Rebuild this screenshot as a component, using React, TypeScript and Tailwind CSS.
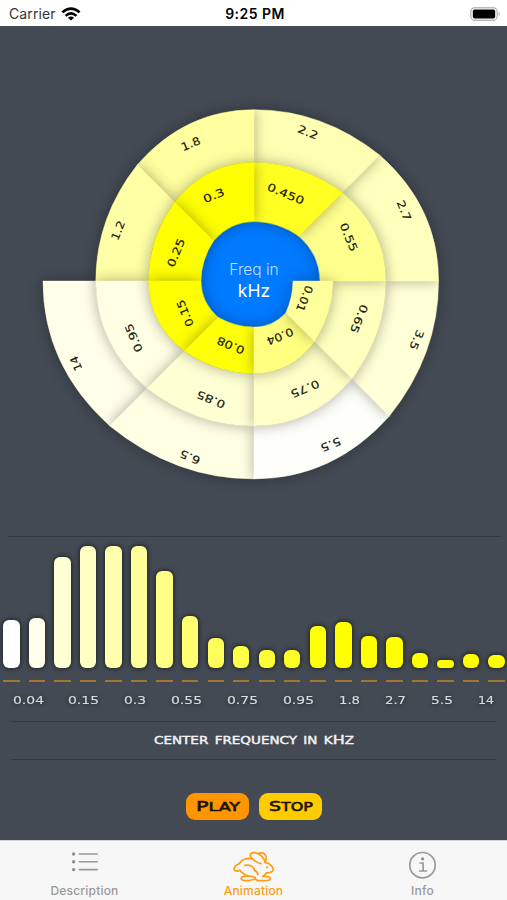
import React from 'react'

type Band = {
  label: string
  color: string
  x: number
  y: number
  width: number
}

const CENTER = { x: 254, y: 280.6 }

const bands: Band[] = [
  { label: '0.01', color: '#ffff9c', x: 304.5, y: 298, width: 27 },
  { label: '0.04', color: '#ffff80', x: 280, y: 336, width: 28 },
  { label: '0.08', color: '#ffff08', x: 230.7, y: 345, width: 29 },
  { label: '0.15', color: '#ffff00', x: 185, y: 312.7, width: 28 },
  { label: '0.25', color: '#ffff00', x: 176, y: 252.3, width: 30 },
  { label: '0.3', color: '#ffff00', x: 213.7, y: 195, width: 22 },
  { label: '0.450', color: '#ffff22', x: 285.7, y: 193.3, width: 39 },
  { label: '0.55', color: '#ffff8e', x: 348.7, y: 236.7, width: 30 },
  { label: '0.65', color: '#ffffbe', x: 359, y: 318.3, width: 30 },
  { label: '0.75', color: '#ffffc8', x: 305, y: 388.3, width: 30 },
  { label: '0.85', color: '#ffffd4', x: 211, y: 399, width: 30 },
  { label: '0.95', color: '#ffffe4', x: 133.7, y: 337.3, width: 30 },
  { label: '1.2', color: '#ffffa6', x: 118, y: 230, width: 20 },
  { label: '1.8', color: '#ffffa0', x: 190.7, y: 143.3, width: 20 },
  { label: '2.2', color: '#ffffb4', x: 308, y: 131.7, width: 21 },
  { label: '2.7', color: '#ffffbe', x: 404, y: 210, width: 21 },
  { label: '3.5', color: '#ffffd8', x: 416.7, y: 339.3, width: 21 },
  { label: '5.5', color: '#fffffa', x: 330.7, y: 444, width: 21 },
  { label: '6.5', color: '#ffffe4', x: 190, y: 456.7, width: 21 },
  { label: '14', color: '#ffffea', x: 76, y: 363, width: 15 },
]

const hubRadii = [39, 45, 46, 51, 53, 57, 59.5, 63.5, 66]

const outerAt = (ray: number) => 79 + 6.6 * ray
const innerAt = (ray: number, hub: boolean) => (hub ? hubRadii[ray] : outerAt(ray - 8))

const point = (ray: number, radius: number) => {
  const angle = (ray * Math.PI) / 4
  return {
    x: CENTER.x + radius * Math.cos(angle),
    y: CENTER.y + radius * Math.sin(angle),
  }
}

// control point sits on the tangent of whichever end lies on an axis
const control = (ray: number, r0: number, r1: number) => {
  const onAxis = ray % 2 === 0
  const axisRay = onAxis ? ray : ray + 1
  const r = onAxis ? r0 : r1
  const p = point(axisRay, r)
  const t = ((axisRay * 45 + (onAxis ? 90 : -90)) * Math.PI) / 180
  return { x: p.x + r * 0.4 * Math.cos(t), y: p.y + r * 0.4 * Math.sin(t) }
}

const wedgePath = (i: number) => {
  const in0 = innerAt(i, i < 8)
  const in1 = innerAt(i + 1, i < 8)
  const out0 = outerAt(i)
  const out1 = outerAt(i + 1)
  const a = point(i, in0)
  const b = point(i, out0)
  const c = point(i + 1, out1)
  const d = point(i + 1, in1)
  const qo = control(i, out0, out1)
  const qi = control(i, in0, in1)
  return `M${a.x} ${a.y}L${b.x} ${b.y}Q${qo.x} ${qo.y} ${c.x} ${c.y}L${d.x} ${d.y}Q${qi.x} ${qi.y} ${a.x} ${a.y}Z`
}

const bars = [
  { height: 48, color: '#ffffff' },
  { height: 50, color: '#ffffea' },
  { height: 111, color: '#ffffd6' },
  { height: 122.5, color: '#ffffc4' },
  { height: 122.5, color: '#ffffae' },
  { height: 122.5, color: '#ffff9a' },
  { height: 97.5, color: '#ffff86' },
  { height: 52.5, color: '#ffff70' },
  { height: 30, color: '#ffff5c' },
  { height: 22.5, color: '#ffff48' },
  { height: 18.5, color: '#ffff38' },
  { height: 18, color: '#ffff28' },
  { height: 42.5, color: '#ffff08' },
  { height: 46, color: '#ffff00' },
  { height: 32, color: '#ffff00' },
  { height: 31.5, color: '#ffff00' },
  { height: 15, color: '#ffff00' },
  { height: 8.5, color: '#ffff00' },
  { height: 14, color: '#ffff00' },
  { height: 13.5, color: '#ffff00' },
]

const ticks = [
  { label: '0.04', width: 31 },
  { label: '0.15', width: 31 },
  { label: '0.3', width: 22 },
  { label: '0.55', width: 31 },
  { label: '0.75', width: 31 },
  { label: '0.95', width: 31 },
  { label: '1.8', width: 21 },
  { label: '2.7', width: 21 },
  { label: '5.5', width: 22 },
  { label: '14', width: 16 },
]

const StatusBar = (): JSX.Element => (
  <div className="flex h-[25.5px] shrink-0 items-center bg-white pt-[2px] text-black">
    <div className="flex flex-1 items-center pl-[9px]">
      <span className="text-[14px] tracking-[0.1px] text-[#333]">Carrier</span>
      <svg className="ml-[5px] h-[14px] w-[20px]" viewBox="0 0 20 14" fill="none" stroke="#000" strokeWidth="2.6">
        <path d="M1.4 5.4Q10 -2.2 18.6 5.4" />
        <path d="M4.6 8.9Q10 4 15.4 8.9" />
        <path d="M10 13.6L6.9 10.7Q10 8.2 13.1 10.7Z" fill="#000" stroke="none" />
      </svg>
    </div>
    <span className="text-[14px] font-semibold tracking-[0.45px]">9:25 PM</span>
    <div className="flex flex-1 justify-end pr-[6px]">
      <svg className="h-[14px] w-[31px]" viewBox="0 0 31 14">
        <rect x="0.8" y="0.8" width="26.4" height="12.4" rx="4" fill="#fff" stroke="#b9b9b9" strokeWidth="1.4" />
        <rect x="2.8" y="2.6" width="22.4" height="8.8" rx="2" fill="#000" />
        <path d="M28.6 4.8Q31 7 28.6 9.2Z" fill="#b0b0b0" />
      </svg>
    </div>
  </div>
)

const Spiral = (): JSX.Element => (
  <svg className="h-[510px] w-full shrink-0 overflow-visible" viewBox="0 25.5 507 510">
    <defs>
      <filter id="shade" x="-30%" y="-30%" width="160%" height="160%" colorInterpolationFilters="sRGB">
        <feDropShadow dx="0" dy="0" stdDeviation="7" floodColor="#000" floodOpacity="0.32" />
      </filter>
    </defs>
    <circle cx="257" cy="276" r="66" fill="#007aff" />
    {bands
      .map((band, i) => (
        <path
          key={band.label}
          d={wedgePath(i)}
          fill={band.color}
          stroke={band.color}
          strokeWidth="0.5"
          filter="url(#shade)"
        />
      ))
      .reverse()}
    {bands.map((band, i) => (
      <text
        key={band.label}
        transform={`translate(${band.x} ${band.y}) rotate(${(i * 45 + 112.5) % 360})`}
        x={-band.width / 2}
        y="3.8"
        textLength={band.width}
        lengthAdjust="spacingAndGlyphs"
        className="font-['DejaVu_Sans',sans-serif] text-[10.8px]"
        fill="#16160c"
        stroke="#16160c"
        strokeWidth="0.15"
      >
        {band.label}
      </text>
    ))}
    <text x="254" y="274.5" textAnchor="middle" className="text-[15.5px] font-light" fill="#c4dfff">
      Freq in
    </text>
    <text x="254" y="296.5" textAnchor="middle" className="text-[17.5px]" fill="#fff">
      kHz
    </text>
  </svg>
)

const Rule = ({ className }: { className: string }): JSX.Element => (
  <div className={`h-px shrink-0 bg-[#343a42] ${className}`} />
)

const Chart = (): JSX.Element => (
  <div className="flex shrink-0 flex-col">
    <Rule className="mr-[6px] ml-[8px]" />
    <div className="flex h-[131.5px] items-end justify-between pr-[2.2px] pl-[3.3px]">
      {bars.map((bar, i) => (
        <div
          key={i}
          className="w-[16.3px] rounded-[6px] shadow-[0_0_4px_1px_rgba(0,0,0,0.5)]"
          style={{ height: bar.height, backgroundColor: bar.color }}
        />
      ))}
    </div>
    <div className="mt-[11.5px] flex justify-between pr-[2.2px] pl-[3.3px]">
      {bars.map((_, i) => (
        <div key={i} className="h-[2px] w-[16.3px] bg-[#a3762f]" />
      ))}
    </div>
    <div className="mt-[11px] flex justify-between pr-[13px] pl-[12.5px]">
      {ticks.map((tick) => (
        <svg
          key={tick.label}
          className="h-[16px] overflow-visible drop-shadow-[0_1px_2px_rgba(0,0,0,0.5)]"
          width={tick.width}
        >
          <text
            x="0"
            y="11"
            textLength={tick.width}
            lengthAdjust="spacingAndGlyphs"
            className="font-['DejaVu_Sans',sans-serif] text-[11px]"
            fill="#d9dbde"
            stroke="#d9dbde"
            strokeWidth="0.15"
          >
            {tick.label}
          </text>
        </svg>
      ))}
    </div>
    <Rule className="mx-[11px] mt-[12px]" />
    <div className="flex h-[37px] items-center justify-center">
      <svg className="h-[16px] w-[200px] overflow-visible">
        <text
          x="0"
          y="11.5"
          textLength="200"
          lengthAdjust="spacingAndGlyphs"
          className="font-['DejaVu_Sans',sans-serif] text-[9.8px] [word-spacing:1.5px]"
          fill="#f2f2f4"
          stroke="#f2f2f4"
          strokeWidth="0.4"
        >
          CENTER FREQUENCY IN K<tspan className="text-[11.6px]">H</tspan>Z
        </text>
      </svg>
    </div>
    <Rule className="mx-[11px]" />
  </div>
)

const PillButton = ({ label, className }: { label: string; className: string }): JSX.Element => (
  <button className={`flex h-[27.5px] w-[63.5px] items-center justify-center rounded-[9px] text-[#1c1200] ${className}`}>
    <svg className="h-[16px] w-[44px] overflow-visible">
      <text
        x="0"
        y="13"
        textLength="44"
        lengthAdjust="spacingAndGlyphs"
        className="font-['DejaVu_Sans',sans-serif] text-[12.2px]"
        fill="#1c1200"
        stroke="#1c1200"
        strokeWidth="0.6"
      >
        <tspan className="text-[14.4px]">{label[0]}</tspan>
        {label.slice(1)}
      </text>
    </svg>
  </button>
)

const ListIcon = (): JSX.Element => (
  <svg className="h-[30px] w-[30px]" viewBox="0 0 30 30" stroke="#999" strokeWidth="1.6" strokeLinecap="round">
    <path d="M9.3 7h18M9.3 14.8h18M9.3 22.6h18" />
    <g fill="#8e8e8e" stroke="none">
      <circle cx="3.6" cy="7" r="1.7" />
      <circle cx="3.6" cy="14.8" r="1.7" />
      <circle cx="3.6" cy="22.6" r="1.7" />
    </g>
  </svg>
)

const HareIcon = (): JSX.Element => (
  <svg
    className="h-[40px] w-[52px]"
    viewBox="0 0 52 40"
    fill="none"
    stroke="#ff9c14"
    strokeWidth="1.7"
    strokeLinecap="round"
    strokeLinejoin="round"
  >
    <path d="M33 17.8C28 16.2 22.2 12.4 22.3 9C22.6 5.4 29.5 6 33.3 9.8C35.4 12 36.6 14 37.2 16.4C41.5 17.2 45 20.4 45.2 23.2C45.2 25.6 42 26.8 38.6 26.8C37.6 28.4 36.2 29.6 34.8 30.4C38.5 30.2 42.4 30.4 42.5 32.4C42.5 34.4 39.5 34.6 36.5 34.6H31.4C28.6 34.6 27.4 33.4 27.2 31.8" />
    <path d="M30.5 7.8C33.2 5.8 36.8 7.2 38 10.2C38.7 12.4 38.2 14.6 37.2 16.4" />
    <path d="M24.4 12.8C18.5 11.4 13.5 14 11.4 17.4C8.5 18.8 5.8 21.4 6.2 23.6C6.8 25.8 10 25 12 24.4C13.4 27 17 28.8 21 30.2" />
    <path d="M16.8 19.4C22 18.2 26.2 20.8 26.6 24.6C28.8 25.4 29.8 26.8 29.9 28.6" />
    <path d="M21 30.2C17 29.9 13.2 30.4 13.2 32.4C13.2 34.5 17.5 34.8 21 34.5C24.5 34.2 27.4 33.2 27.2 31.8C26.7 30.6 23.5 30.4 21 30.2Z" />
    <circle cx="39" cy="21.3" r="1.1" fill="#ff9c14" stroke="none" />
  </svg>
)

const InfoIcon = (): JSX.Element => (
  <svg className="h-[34px] w-[30px]" viewBox="0 0 30 34" fill="none" stroke="#999" strokeWidth="1.7">
    <circle cx="14.5" cy="19.2" r="12.7" />
    <path d="M12.1 17h3v7.8M11.6 25h6.8" strokeLinecap="round" />
    <circle cx="14.6" cy="12.8" r="1.6" fill="#8e8e8e" stroke="none" />
  </svg>
)

const TabItem = ({
  label,
  className,
  children,
}: {
  label: string
  className: string
  children: React.ReactNode
}): JSX.Element => (
  <button className={`flex flex-1 flex-col items-center ${className}`}>
    <span className="flex h-[42px] items-start justify-center">{children}</span>
    <span className="text-[12px] leading-[16px] font-medium tracking-[0.2px]">{label}</span>
  </button>
)

const TabBar = (): JSX.Element => (
  <div className="flex flex-1 border-t border-[#d4d4d6] bg-[#f7f7f7]">
    <TabItem label="Description" className="text-[#999]">
      <span className="pt-[6px]">
        <ListIcon />
      </span>
    </TabItem>
    <TabItem label="Animation" className="text-[#ff9c14]">
      <span className="pt-[5px]">
        <HareIcon />
      </span>
    </TabItem>
    <TabItem label="Info" className="text-[#999]">
      <span className="pt-[5px]">
        <InfoIcon />
      </span>
    </TabItem>
  </div>
)

export default function App(): JSX.Element {
  return (
    <div className="flex h-[900px] w-[507px] flex-col overflow-hidden bg-[#434a53] font-[Inter,sans-serif]">
      <StatusBar />
      <Spiral />
      <Chart />
      <div className="flex h-[80px] shrink-0 items-start justify-center gap-[9.5px] pt-[33px] pl-px">
        <PillButton label="PLAY" className="bg-[#ff9500]" />
        <PillButton label="STOP" className="bg-[#ffcc00]" />
      </div>
      <TabBar />
    </div>
  )
}
